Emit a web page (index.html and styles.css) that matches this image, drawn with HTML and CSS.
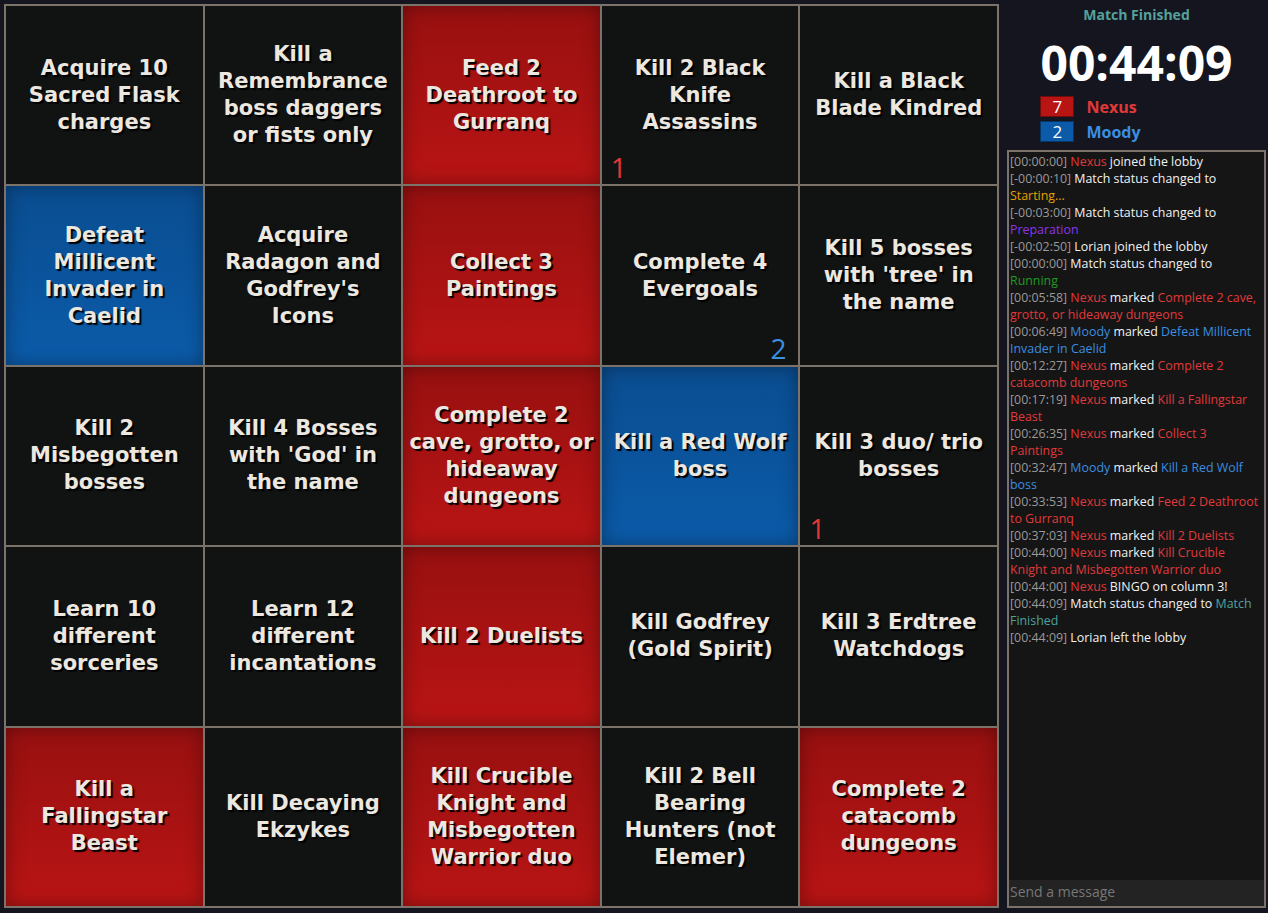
FILE: index.html
```html
<!DOCTYPE html>
<html>
<head>
<meta charset="utf-8">
<link rel="stylesheet" href="styles.css">
</head>
<body>
<div class="page">
  <div class="board">
    <div class="cell"><span>Acquire 10<br>Sacred Flask<br>charges</span></div>
    <div class="cell"><span>Kill a<br>Remembrance<br>boss daggers<br>or fists only</span></div>
    <div class="cell red"><span>Feed 2<br>Deathroot to<br>Gurranq</span></div>
    <div class="cell"><span>Kill 2 Black<br>Knife<br>Assassins</span><b class="cnt cnt-red">1</b></div>
    <div class="cell"><span>Kill a Black<br>Blade Kindred</span></div>

    <div class="cell blue"><span>Defeat<br>Millicent<br>Invader in<br>Caelid</span></div>
    <div class="cell"><span>Acquire<br>Radagon and<br>Godfrey's<br>Icons</span></div>
    <div class="cell red"><span>Collect 3<br>Paintings</span></div>
    <div class="cell"><span>Complete 4<br>Evergoals</span><b class="cnt cnt-blue">2</b></div>
    <div class="cell"><span>Kill 5 bosses<br>with 'tree' in<br>the name</span></div>

    <div class="cell"><span>Kill 2<br>Misbegotten<br>bosses</span></div>
    <div class="cell"><span>Kill 4 Bosses<br>with 'God' in<br>the name</span></div>
    <div class="cell red"><span>Complete 2<br>cave, grotto, or<br>hideaway<br>dungeons</span></div>
    <div class="cell blue"><span>Kill a Red Wolf<br>boss</span></div>
    <div class="cell"><span>Kill 3 duo/ trio<br>bosses</span><b class="cnt cnt-red">1</b></div>

    <div class="cell"><span>Learn 10<br>different<br>sorceries</span></div>
    <div class="cell"><span>Learn 12<br>different<br>incantations</span></div>
    <div class="cell red"><span>Kill 2 Duelists</span></div>
    <div class="cell"><span>Kill Godfrey<br>(Gold Spirit)</span></div>
    <div class="cell"><span>Kill 3 Erdtree<br>Watchdogs</span></div>

    <div class="cell red"><span>Kill a<br>Fallingstar<br>Beast</span></div>
    <div class="cell"><span>Kill Decaying<br>Ekzykes</span></div>
    <div class="cell red"><span>Kill Crucible<br>Knight and<br>Misbegotten<br>Warrior duo</span></div>
    <div class="cell"><span>Kill 2 Bell<br>Bearing<br>Hunters (not<br>Elemer)</span></div>
    <div class="cell red"><span>Complete 2<br>catacomb<br>dungeons</span></div>
  </div>

  <div class="side">
    <div class="header">
      <div class="status">Match Finished</div>
      <div class="clock">
        <div class="timer">00:44:09</div>
        <div class="score"><span class="box box-red">7</span><span class="pname nexus">Nexus</span></div>
        <div class="score"><span class="box box-blue">2</span><span class="pname moody">Moody</span></div>
      </div>
    </div>
    <div class="chat">
      <div class="log">
        <div class="line"><span class="ts">[00:00:00]</span> <span class="r">Nexus</span> joined the lobby</div>
        <div class="line"><span class="ts">[-00:00:10]</span> Match status changed to <span class="o">Starting...</span></div>
        <div class="line"><span class="ts">[-00:03:00]</span> Match status changed to <span class="p">Preparation</span></div>
        <div class="line"><span class="ts">[-00:02:50]</span> Lorian joined the lobby</div>
        <div class="line"><span class="ts">[00:00:00]</span> Match status changed to <span class="g">Running</span></div>
        <div class="line"><span class="ts">[00:05:58]</span> <span class="r">Nexus</span> marked <span class="r">Complete 2 cave, grotto, or hideaway dungeons</span></div>
        <div class="line"><span class="ts">[00:06:49]</span> <span class="b">Moody</span> marked <span class="b">Defeat Millicent Invader in Caelid</span></div>
        <div class="line"><span class="ts">[00:12:27]</span> <span class="r">Nexus</span> marked <span class="r">Complete 2 catacomb dungeons</span></div>
        <div class="line"><span class="ts">[00:17:19]</span> <span class="r">Nexus</span> marked <span class="r">Kill a Fallingstar Beast</span></div>
        <div class="line"><span class="ts">[00:26:35]</span> <span class="r">Nexus</span> marked <span class="r">Collect 3 Paintings</span></div>
        <div class="line"><span class="ts">[00:32:47]</span> <span class="b">Moody</span> marked <span class="b">Kill a Red Wolf boss</span></div>
        <div class="line"><span class="ts">[00:33:53]</span> <span class="r">Nexus</span> marked <span class="r">Feed 2 Deathroot to Gurranq</span></div>
        <div class="line"><span class="ts">[00:37:03]</span> <span class="r">Nexus</span> marked <span class="r">Kill 2 Duelists</span></div>
        <div class="line"><span class="ts">[00:44:00]</span> <span class="r">Nexus</span> marked <span class="r">Kill Crucible Knight and Misbegotten Warrior duo</span></div>
        <div class="line"><span class="ts">[00:44:00]</span> <span class="r">Nexus</span> BINGO on column 3!</div>
        <div class="line"><span class="ts">[00:44:09]</span> Match status changed to <span class="t">Match Finished</span></div>
        <div class="line"><span class="ts">[00:44:09]</span> Lorian left the lobby</div>
      </div>
      <div class="input">Send a message</div>
    </div>
  </div>
</div>
</body>
</html>
```

FILE: styles.css
```css
html, body {
  margin: 0;
  padding: 0;
  background: #15151f;
  font-family: "Open Sans", "Noto Sans", sans-serif;
}

.page {
  display: flex;
  padding: 4px 2px 0 4px;
  gap: 8px;
  height: 913px;
  box-sizing: border-box;
}

.board {
  width: 995px;
  height: 904px;
  box-sizing: border-box;
  display: grid;
  grid-template-columns: repeat(5, 1fr);
  grid-template-rows: repeat(5, 1fr);
  gap: 2px;
  padding: 2px;
  background: #7b7369;
  flex: none;
}

.cell {
  position: relative;
  background: #111212;
  display: flex;
  align-items: center;
  justify-content: center;
  text-align: center;
  padding: 0 2px;
  color: #ece8e0;
  font-family: "DejaVu Sans", "Verdana", sans-serif;
  font-size: 21px;
  font-weight: 700;
  line-height: 27px;
  white-space: nowrap;
  text-shadow: 2px 2px 1px #000;
}

.cell.red {
  background: linear-gradient(#981010, #b91414);
  box-shadow: inset 0 0 18px rgba(0, 0, 0, 0.35);
}

.cell.blue {
  background: linear-gradient(#0a4d90, #0b5ba9);
  box-shadow: inset 0 0 18px rgba(0, 0, 0, 0.35);
}

.cnt {
  position: absolute;
  bottom: 2px;
  font-family: "Open Sans", sans-serif;
  font-size: 28px;
  font-weight: 400;
  line-height: 30px;
  text-shadow: none;
}

.cnt-red {
  left: 9px;
  color: #e23838;
}

.cnt-blue {
  right: 12px;
  color: #3b8ee0;
}

.side {
  width: 259px;
  display: flex;
  flex-direction: column;
  flex: none;
  padding-bottom: 5px;
}

.header {
  height: 146px;
  display: flex;
  flex-direction: column;
  align-items: center;
}

.status {
  margin-top: 1px;
  color: #56a19b;
  font-size: 14px;
  font-weight: 700;
  line-height: 20px;
}

.clock {
  display: flex;
  flex-direction: column;
  margin-top: 9px;
}

.timer {
  color: #fff;
  font-size: 48px;
  font-weight: 700;
  line-height: 58px;
  margin-bottom: 4px;
}

.score {
  display: flex;
  align-items: center;
  height: 21px;
  margin-bottom: 4px;
}

.box {
  width: 32px;
  height: 19px;
  border: 1px solid rgba(0, 0, 0, 0.4);
  color: #fff;
  font-size: 17px;
  line-height: 19px;
  text-align: center;
  margin-right: 12px;
}

.box-red { background: #b91414; }
.box-blue { background: #0b5ba9; }

.pname {
  font-size: 16px;
  font-weight: 700;
}

.nexus { color: #e23838; }
.moody { color: #3b8ee0; }

.chat {
  flex: 1;
  border: 2px solid #7b7369;
  background: #151515;
  display: flex;
  flex-direction: column;
}

.log {
  flex: 1;
  padding: 1px 2px 0 1px;
  font-size: 12.4px;
  line-height: 17px;
  color: #f2f2f2;
}

.ts { color: #9a9a9a; }
.r { color: #e03a3a; }
.b { color: #3b8ee0; }
.o { color: #e8a000; }
.p { color: #8a35e8; }
.g { color: #229a22; }
.t { color: #4fa39c; }

.input {
  height: 26px;
  background: #232323;
  color: #777;
  font-size: 14px;
  line-height: 24px;
  padding-left: 1px;
}
```
